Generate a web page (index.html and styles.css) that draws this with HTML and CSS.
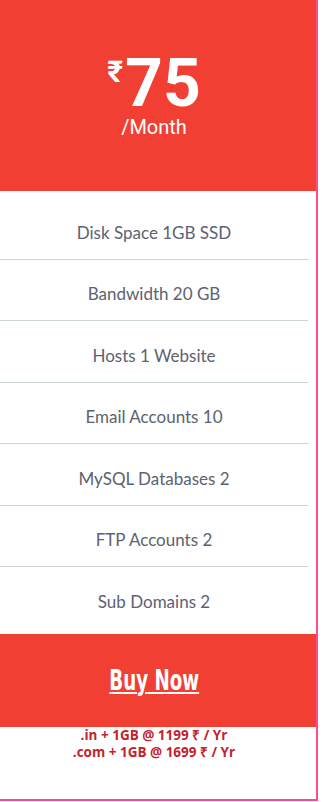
FILE: index.html
```html
<!DOCTYPE html>
<html lang="en">
<head>
    <meta charset="UTF-8">
    <meta name="viewport" content="width=device-width, initial-scale=1.0">
    <title>Hosting Plan</title>
    <link rel="stylesheet" href="styles.css">
</head>
<body>
    <div class="plan">
        <div class="plan-head">
            <div class="price"><span class="currency">₹</span>75</div>
            <div class="period">/Month</div>
        </div>

        <ul class="features">
            <li>Disk Space 1GB SSD</li>
            <li>Bandwidth 20 GB</li>
            <li>Hosts 1 Website</li>
            <li>Email Accounts 10</li>
            <li>MySQL Databases 2</li>
            <li>FTP Accounts 2</li>
            <li>Sub Domains 2</li>
        </ul>

        <div class="buy">
            <a href="#" class="buy-link">Buy Now</a>
        </div>

        <div class="domains">
            <p>.in + 1GB @ 1199 ₹ / Yr</p>
            <p>.com + 1GB @ 1699 ₹ / Yr</p>
        </div>
    </div>
</body>
</html>
```

FILE: styles.css
```css
body {
    margin: 0;
    background: #fff;
    font-family: "Open Sans", Arial, sans-serif;
}
.plan {
    width: 318px;
    height: 801px;
    box-sizing: border-box;
    border-right: 2px solid #ff4a8d;
    border-bottom: 2px solid #ff4a8d;
    background: #fff;
}
.plan-head {
    background: #f13f34;
    color: #fff;
    height: 191px;
    box-sizing: border-box;
    padding: 42px 8px 0 0;
    text-align: center;
    font-family: Roboto, "Noto Sans", sans-serif;
}
.price {
    font-size: 66px;
    font-weight: 700;
    line-height: 60px;
}
.currency {
    font-size: 30px;
    font-weight: 700;
    vertical-align: 24px;
    margin-right: 2px;
}
.period {
    font-size: 20px;
    line-height: 22px;
    margin-top: 2px;
}
.features {
    list-style: none;
    margin: 0;
    padding: 7px 8px 0 0;
}
.features li {
    font-family: Lato, "Open Sans", sans-serif;
    font-size: 17px;
    line-height: 20px;
    color: #5c6270;
    text-align: center;
    padding: 24.5px 0 16px;
    border-bottom: 1px solid #cdd6da;
}
.features li:last-child {
    border-bottom: none;
}
.buy {
    margin-top: 6px;
    background: #f13f34;
    height: 93px;
    box-sizing: border-box;
    padding-right: 8px;
    display: flex;
    align-items: center;
    justify-content: center;
}
.buy-link {
    display: inline-block;
    color: #fff;
    font-family: "DejaVu Sans Condensed", "DejaVu Sans", sans-serif;
    font-weight: 700;
    font-size: 29px;
    line-height: 34px;
    transform: scaleX(0.7);
    text-decoration: underline;
    text-underline-offset: 2px;
    text-decoration-thickness: 2px;
}
.domains {
    text-align: center;
    color: #c4222e;
    font-weight: 700;
    font-size: 13.5px;
    line-height: 17px;
    padding: 0 8px 0 0;
}
.domains p {
    margin: 0;
}
```
